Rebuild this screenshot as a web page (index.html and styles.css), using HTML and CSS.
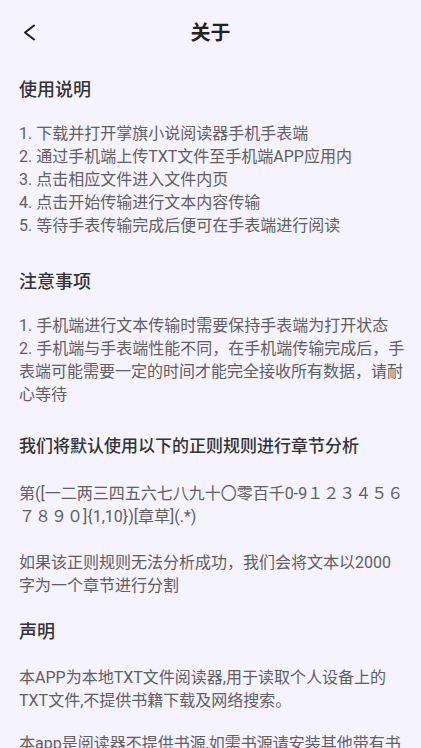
FILE: index.html
```html
<!DOCTYPE html>
<html lang="zh-CN">
<head>
    <meta charset="UTF-8" />
    <meta name="viewport" content="width=device-width, initial-scale=1.0"/>
    <title>关于</title>
    <link rel="stylesheet" href="styles.css">
</head>
<body>
    <header class="header">
        <div class="back">
            <svg width="24" height="24" viewBox="0 0 24 24" fill="none" stroke="#1f1f1f" stroke-width="2" stroke-linecap="round" stroke-linejoin="round">
                <polyline points="17,6.5 8,13.5 17,20.5"></polyline>
            </svg>
        </div>
        <div class="header-title">关于</div>
        <div class="header-space"></div>
    </header>

    <div class="content">
        <div class="section-title first">使用说明</div>
        <div class="text-block list">
            <div>1. 下载并打开掌旗小说阅读器手机手表端</div>
            <div>2. 通过手机端上传TXT文件至手机端APP应用内</div>
            <div>3. 点击相应文件进入文件内页</div>
            <div>4. 点击开始传输进行文本内容传输</div>
            <div>5. 等待手表传输完成后便可在手表端进行阅读</div>
        </div>

        <div class="section-title notice">注意事项</div>
        <div class="text-block list">
            <div>1. 手机端进行文本传输时需要保持手表端为打开状态</div>
            <div>2. 手机端与手表端性能不同，在手机端传输完成后，手表端可能需要一定的时间才能完全接收所有数据，请耐心等待</div>
        </div>

        <div class="sub-title">我们将默认使用以下的正则规则进行章节分析</div>
        <div class="text-block regex">第([一二两三四五六七八九十〇零百千0-9１２３４５６７８９０]{1,10})[章草](.*)</div>
        <div class="text-block para">如果该正则规则无法分析成功，我们会将文本以2000字为一个章节进行分割</div>

        <div class="section-title statement">声明</div>
        <div class="text-block para-s">本APP为本地TXT文件阅读器,用于读取个人设备上的TXT文件,不提供书籍下载及网络搜索。</div>
        <div class="text-block para-last">本app是阅读器不提供书源,如需书源请安装其他带有书源的阅读软件。</div>
    </div>
</body>
</html>
```

FILE: styles.css
```css
body {
    margin: 0;
    background-color: #F5F3FE;
    font-family: Roboto, "Noto Sans CJK SC", sans-serif;
    color: #333;
}

.header {
    height: 62px;
    display: flex;
    align-items: center;
    justify-content: space-between;
    padding: 0 17px;
}

.back {
    width: 24px;
    height: 24px;
    display: flex;
}

.header-title {
    font-size: 20px;
    font-weight: bold;
    color: #222;
}

.header-space {
    width: 24px;
}

.content {
    padding: 0 16px 0 19px;
}

.section-title {
    font-size: 18px;
    font-weight: 500;
    line-height: 26px;
    color: #333;
}

.section-title.first {
    margin-top: 15px;
}

.section-title.notice {
    margin-top: 32px;
}

.section-title.statement {
    margin-top: 22px;
}

.sub-title {
    margin-top: 27px;
    font-size: 17px;
    font-weight: 500;
    line-height: 26px;
    color: #333;
}

.text-block {
    font-size: 16px;
    line-height: 23px;
    color: #606060;
}

.list {
    margin-top: 19px;
}

.regex {
    margin-top: 23px;
}

.para {
    margin-top: 23px;
}

.para-s {
    margin-top: 21px;
}

.para-last {
    margin-top: 20px;
}
```
